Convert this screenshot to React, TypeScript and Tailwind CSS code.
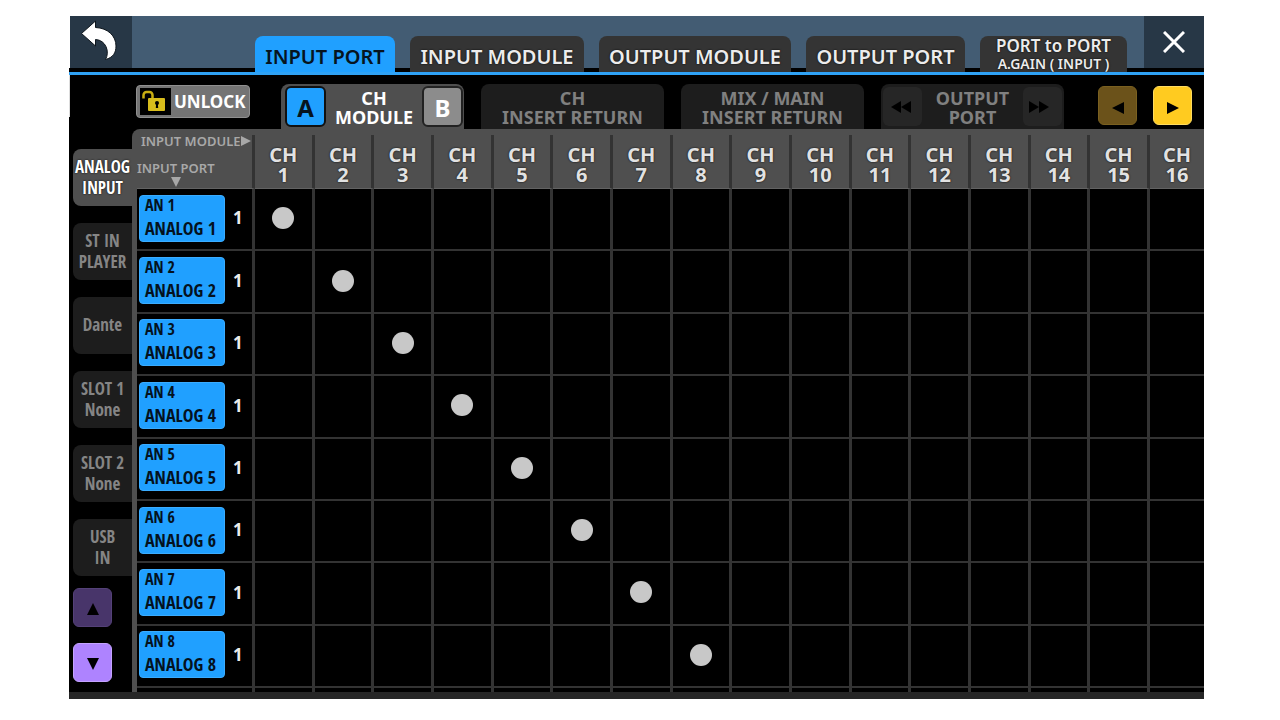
import clsx from 'clsx'

const channels = Array.from({ length: 16 }, (_, i) => i + 1)
const ports = Array.from({ length: 8 }, (_, i) => i + 1)

const sourceTabs = [
  ['ANALOG', 'INPUT'],
  ['ST IN', 'PLAYER'],
  ['Dante'],
  ['SLOT 1', 'None'],
  ['SLOT 2', 'None'],
  ['USB', 'IN'],
]

const narrow = "font-['Noto_Sans_Condensed','Open_Sans_Condensed','Noto_Sans',sans-serif]"
const outline = '[text-shadow:0_0_2px_#000]'

type Direction = 'left' | 'right' | 'up' | 'down'

const trianglePoints: Record<Direction, string> = {
  left: '0,6 12,0 12,12',
  right: '12,6 0,0 0,12',
  up: '6,0 12,12 0,12',
  down: '6,12 12,0 0,0',
}

function Triangle({ direction, className }: { direction: Direction; className?: string }) {
  return (
    <svg viewBox="0 0 12 12" preserveAspectRatio="none" fill="currentColor" className={className} aria-hidden="true">
      <polygon points={trianglePoints[direction]} />
    </svg>
  )
}

function BackIcon() {
  return (
    <svg viewBox="0 0 62 52" className="h-13 w-full" aria-hidden="true">
      <path
        d="M11.500 17.500 25.500 5V11.500C38 12 46 20 46 30C46 37 43 41.500 35.500 43.500C40 36 36 24 25.500 23.500V30Z"
        fill="#fff"
        stroke="#0d151c"
        strokeWidth="1"
        strokeLinejoin="round"
      />
    </svg>
  )
}

function UnlockIcon() {
  return (
    <svg viewBox="0 0 31 27" className="h-[27px] w-[31px] bg-black" aria-hidden="true">
      <path d="M3.500 10.500V7a3 3 0 0 1 3-3h3a3 3 0 0 1 3 3v4" fill="none" stroke="#c9ae12" strokeWidth="2.500" />
      <rect x="8" y="10" width="17" height="13" rx="1" fill="#d8bd1c" />
      <circle cx="17" cy="15" r="2" fill="#000" />
      <path d="M16.200 15h1.600l.4 5h-2.400z" fill="#000" />
    </svg>
  )
}

function Lines({ lines }: { lines: (string | number)[] }) {
  return (
    <span className="flex flex-col items-center">
      {lines.map((line) => (
        <span key={line} className="block">
          {line}
        </span>
      ))}
    </span>
  )
}

function TopTab({ label, className, active }: { label: string; className: string; active?: boolean }) {
  return (
    <button
      className={clsx(
        'h-9 rounded-t-lg pt-1.5 text-center text-xl font-semibold whitespace-nowrap',
        active ? 'bg-[#20a0ff] text-[#061420]' : 'bg-[#343434] text-[#ececec]',
        !active && outline,
        className,
      )}
    >
      {label}
    </button>
  )
}

function TopBar() {
  return (
    <header className="border-b-[3px] border-[#2fa2f5] bg-black">
      <div className="flex h-14 bg-[linear-gradient(#435c73_52px,#000_52px)]">
        <button aria-label="Back" className="h-13 w-[63px] border-l border-white bg-[#273746]">
          <BackIcon />
        </button>
        <nav className="flex flex-1 items-end gap-[15px] pl-[123px]">
          <TopTab label="INPUT PORT" className="w-[140px]" active />
          <TopTab label="INPUT MODULE" className="w-[174px]" />
          <TopTab label="OUTPUT MODULE" className="w-[192px]" />
          <TopTab label="OUTPUT PORT" className="w-[159px]" />
          <button
            className={clsx(
              'flex h-9 w-[147px] flex-col items-center justify-center rounded-t-lg bg-[#343434] font-semibold whitespace-nowrap text-[#ececec]',
              outline,
            )}
          >
            <span className="text-[17px] leading-5">PORT to PORT</span>
            <span className="text-sm leading-4">A.GAIN ( INPUT )</span>
          </button>
        </nav>
        <button aria-label="Close" className="flex h-13 w-[60px] items-center justify-center bg-[#273746]">
          <svg viewBox="0 0 22 22" className="size-[22px]" aria-hidden="true">
            <path d="M1 1 21 21M21 1 1 21" stroke="#fff" strokeWidth="3" />
          </svg>
        </button>
      </div>
    </header>
  )
}

function Sidebar() {
  return (
    <aside className="flex w-[63px] flex-col bg-black">
      <div className="mb-8 h-[42px] w-px bg-[#ddd]" />
      <div className="flex flex-col gap-[17px] pl-1">
        {sourceTabs.map((lines, i) => (
          <button
            key={lines.join(' ')}
            className={clsx(
              'flex h-[57px] items-center justify-center rounded-l-lg pb-0.5 text-[17px] leading-[21px] font-bold whitespace-nowrap',
              narrow,
              i === 0 ? 'bg-[#4f4f4f] text-white' : 'bg-[#1d1d1d] text-[#858585]',
              i === 0 && outline,
            )}
          >
            <Lines lines={lines} />
          </button>
        ))}
      </div>
      <div className="mt-3 flex flex-col gap-4 pl-1 text-black">
        <button
          aria-label="Scroll up"
          className="flex size-[39px] items-center justify-center rounded-md border border-[#544178] bg-[#48356a]"
        >
          <Triangle direction="up" className="mt-0.5 size-3" />
        </button>
        <button
          aria-label="Scroll down"
          className="flex size-[39px] items-center justify-center rounded-md border border-[#c4a3ff] bg-[#ae83ff]"
        >
          <Triangle direction="down" className="mt-0.5 size-3" />
        </button>
      </div>
    </aside>
  )
}

const toolTab = 'flex h-[45px] w-[183px] items-center rounded-t-lg text-lg leading-[19px] font-bold'

function Toolbar() {
  return (
    <div className="flex h-[54px] items-end justify-between bg-black pr-3 pl-1">
      <div className="flex items-end">
        <button className="mb-[11px] flex h-[33px] w-[114px] items-center gap-[3px] rounded-sm border border-[#909090] bg-[#747474] pl-[3px] text-[17px] font-bold text-white">
          <UnlockIcon />
          <span>UNLOCK</span>
        </button>
        <div className="ml-[31px] flex gap-[17px]">
          <div className={clsx(toolTab, 'justify-between bg-[#4f4f4f] pr-px pl-1 text-white', outline)}>
            <button className="size-[41px] rounded-md border-2 border-[#111] bg-[#20a0ff] pt-0.5 text-2xl font-bold text-[#061420] text-shadow-none">
              A
            </button>
            <button className="pt-0.5">
              <Lines lines={['CH', 'MODULE']} />
            </button>
            <button className="size-[41px] rounded-md border-2 border-[#222] bg-[#8c8c8c] pt-0.5 text-2xl font-bold text-white">
              B
            </button>
          </div>
          <button className={clsx(toolTab, 'justify-center bg-[#1d1d1d] pt-0.5 text-[#808080]')}>
            <Lines lines={['CH', 'INSERT RETURN']} />
          </button>
          <button className={clsx(toolTab, 'justify-center bg-[#1d1d1d] pt-0.5 text-[#808080]')}>
            <Lines lines={['MIX / MAIN', 'INSERT RETURN']} />
          </button>
          <div className={clsx(toolTab, 'justify-between bg-[#1d1d1d] px-0.5 text-[#808080]')}>
            <button
              aria-label="Previous page"
              className="flex size-[39px] items-center justify-center rounded-md bg-[#262626] pr-1 text-black"
            >
              <Triangle direction="left" className="h-3 w-[10px]" />
              <Triangle direction="left" className="h-3 w-[10px]" />
            </button>
            <button className="pt-0.5">
              <Lines lines={['OUTPUT', 'PORT']} />
            </button>
            <button
              aria-label="Next page"
              className="flex size-[39px] items-center justify-center rounded-md bg-[#262626] pr-2 text-black"
            >
              <Triangle direction="right" className="h-3 w-[10px]" />
              <Triangle direction="right" className="h-3 w-[10px]" />
            </button>
          </div>
        </div>
      </div>
      <div className="mb-1 flex gap-4 text-black">
        <button
          aria-label="Scroll left"
          className="flex size-[39px] items-center justify-center rounded-md border border-[#7a6020] bg-[#6b521a]"
        >
          <Triangle direction="left" className="mt-1 size-3" />
        </button>
        <button
          aria-label="Scroll right"
          className="flex size-[39px] items-center justify-center rounded-md border border-[#ffdc60] bg-[#ffcb20]"
        >
          <Triangle direction="right" className="mt-1 size-3" />
        </button>
      </div>
    </div>
  )
}

function PatchMatrix() {
  return (
    <div className="rounded-tl-lg bg-[#4f4f4f] pt-1.5 pl-[5px]">
      <table className="h-[557px] w-full table-fixed border-separate border-spacing-0 bg-black">
        <thead>
          <tr className="h-[54px] bg-[#4f4f4f]">
            <th className="w-[118px] border-r-[3px] border-b border-r-[#333] border-b-[#626262] p-0 text-left align-top text-[13px] leading-3 font-semibold whitespace-nowrap text-[#a8a8a8]">
              <div className="flex items-center pl-1">
                INPUT MODULE
                <Triangle direction="right" className="h-[10px] w-[10px]" />
              </div>
              <div className="mt-[15px]">INPUT PORT</div>
              <Triangle direction="down" className="mt-[3px] ml-[34px] h-[10px] w-[10px]" />
            </th>
            {channels.map((ch) => (
              <th
                key={ch}
                className={clsx(
                  'border-b border-b-[#626262] p-0 pt-1.5 text-xl leading-5 font-bold text-[#e2e2e2] last:w-[54px]',
                  ch < 16 && 'border-r-[3px] border-r-[#333]',
                  outline,
                )}
              >
                <Lines lines={['CH', ch]} />
              </th>
            ))}
          </tr>
        </thead>
        <tbody>
          {ports.map((port) => (
            <tr key={port}>
              <th className="border-r-[3px] border-b-2 border-[#333] p-0 pb-0.5 font-normal">
                <div className="flex items-center gap-2 pl-0.5">
                  <button
                    className={clsx(
                      'flex h-[47px] w-[86px] flex-col rounded-sm border border-[#3aacff] bg-[#20a0ff] pl-[5px] text-left font-bold whitespace-nowrap text-[#04121e]',
                      narrow,
                    )}
                  >
                    <span className="text-base leading-[18px]">AN {port}</span>
                    <span className="text-lg leading-7">ANALOG {port}</span>
                  </button>
                  <span className="text-[17px] font-bold text-[#ececec]">1</span>
                </div>
              </th>
              {channels.map((ch) => (
                <td
                  key={ch}
                  className={clsx('border-b-2 border-[#333] p-0 pb-0.5', ch < 16 && 'border-r-[3px]')}
                >
                  {ch === port && <div className="mx-auto size-[22px] rounded-full bg-[#c8c8c8]" />}
                </td>
              ))}
            </tr>
          ))}
          <tr className="h-1">
            <td className="border-r-[3px] border-[#333] p-0" />
            {channels.map((ch) => (
              <td key={ch} className={clsx('border-[#333] p-0', ch < 16 && 'border-r-[3px]')} />
            ))}
          </tr>
        </tbody>
      </table>
    </div>
  )
}

export default function App() {
  return (
    <main className="min-h-screen bg-white pt-4 pr-[76px] pb-5 pl-[69px] font-['Noto_Sans',sans-serif]">
      <TopBar />
      <div className="flex bg-black">
        <Sidebar />
        <div className="min-w-0 flex-1">
          <Toolbar />
          <PatchMatrix />
        </div>
      </div>
      <footer className="h-[7px] bg-[#262626]" />
    </main>
  )
}
